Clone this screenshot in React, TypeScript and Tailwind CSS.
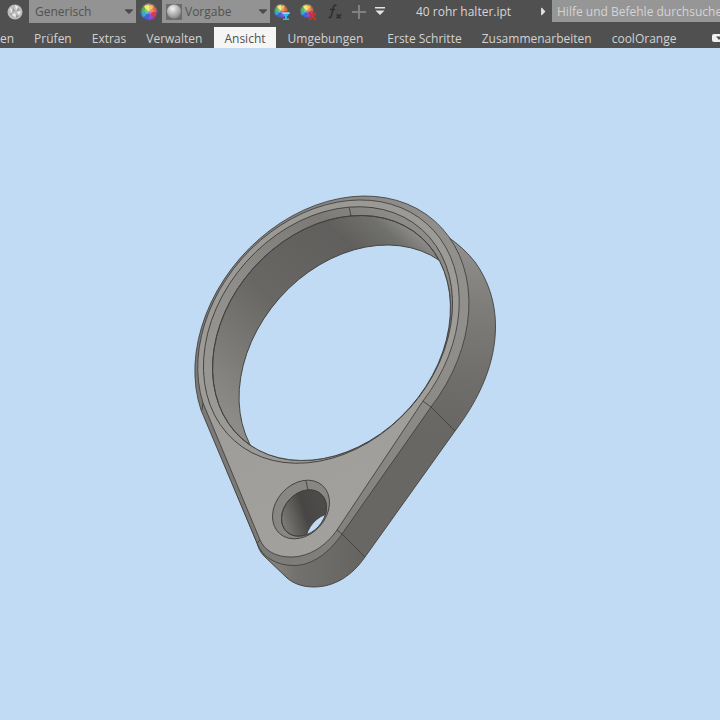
import { FaCaretDown, FaCaretRight } from "react-icons/fa";

const TABS = [
  { label: "en", className: "pr-2" },
  { label: "Prüfen", className: "pl-3 pr-2.5" },
  { label: "Extras", className: "pl-2.5 pr-2" },
  { label: "Verwalten", className: "px-3" },
  { label: "Ansicht", className: "px-2.5", active: true },
  { label: "Umgebungen", className: "pl-3 pr-3.5" },
  { label: "Erste Schritte", className: "pl-2.5 pr-2" },
  { label: "Zusammenarbeiten", className: "pl-3 pr-2.5" },
  { label: "coolOrange", className: "px-2.5" },
];

const WHEEL = ["#f4b23c", "#ee6a35", "#d83a52", "#9a4bc4", "#4561d8", "#38a9d8", "#58b947", "#f3e65a"];

function WheelShape() {
  return (
    <>
      {WHEEL.map((color, i) => {
        const a = (i / WHEEL.length) * Math.PI * 2;
        const b = ((i + 1) / WHEEL.length) * Math.PI * 2;
        return (
          <path
            key={color}
            fill={color}
            d={`M0 0L${8 * Math.sin(a)} ${-8 * Math.cos(a)}A8 8 0 0 1 ${8 * Math.sin(b)} ${-8 * Math.cos(b)}Z`}
          />
        );
      })}
      <circle r="7.5" fill="none" stroke="#4a4f9a" strokeOpacity="0.7" />
      <circle r="4" cy="-2" fill="#fff" fillOpacity="0.25" />
    </>
  );
}

function Dropdown({ label, value, className }: { label: string; value: string; className: string }) {
  return (
    <div className="relative flex h-[23px]">
      <select
        aria-label={label}
        className={`appearance-none bg-[#939393] text-[#525252] outline-none ${className}`}
      >
        <option>{value}</option>
      </select>
      <FaCaretDown className="pointer-events-none absolute top-1 right-0 text-[#4c4c4c]" size={14} />
    </div>
  );
}

function QuickAccess() {
  return (
    <div className="flex h-[27px] items-start">
      <button aria-label="Material" className="ml-[7px] pt-1">
        <svg width="16" height="16" viewBox="0 0 16 16">
          <circle cx="8" cy="8" r="7.5" fill="#bcbcbc" />
          <path d="M3 4l3 2-2 3zM8 1l3 2-2 3zM10 8l4-1-2 4zM5 11l3-2 1 4z" fill="#f1f1f1" />
          <path d="M6 4l2 3-3 1zM11 4l2 2-3 1zM3 9l2 1-1 2zM9 11l3 1-3 2z" fill="#969696" />
        </svg>
      </button>
      <div className="ml-1.5">
        <Dropdown label="Material" value="Generisch" className="w-[107px] pl-1.5" />
      </div>
      <button aria-label="Darstellung" className="ml-1 pt-[3px]">
        <svg width="18" height="18" viewBox="-8.500 -8.500 17 17">
          <WheelShape />
        </svg>
      </button>
      <div className="relative ml-1">
        <Dropdown label="Darstellung" value="Vorgabe" className="w-[108px] pl-[23px]" />
        <svg
          className="pointer-events-none absolute top-1 left-1"
          width="16"
          height="16"
          viewBox="0 0 16 16"
          aria-hidden="true"
        >
          <defs>
            <radialGradient id="ball" cx="0.4" cy="0.3" r="0.7">
              <stop offset="0" stopColor="#f4f4f4" />
              <stop offset="0.5" stopColor="#bdbdbd" />
              <stop offset="1" stopColor="#8a8a8a" />
            </radialGradient>
          </defs>
          <rect width="16" height="16" fill="#6c6c6c" />
          <circle cx="8" cy="7.5" r="7" fill="url(#ball)" />
        </svg>
      </div>
      <button aria-label="Anpassen" className="ml-1 pt-1">
        <svg width="17" height="17" viewBox="0 0 17 17">
          <g transform="translate(7 7) scale(.85)">
            <WheelShape />
          </g>
          <path d="M7 8.500h9.500l-3.500 4v2h2v1.500h-6v-1.500h2v-2z" fill="#2fb8ea" />
          <path d="M8.500 9h7" stroke="#d9f4ff" />
        </svg>
      </button>
      <button aria-label="Löschen" className="ml-2 pt-1">
        <svg width="19" height="17" viewBox="0 0 19 17">
          <g transform="translate(8 7) scale(.85)">
            <WheelShape />
          </g>
          <path d="M10 9l7 7M17 9l-7 7" stroke="#e02b20" strokeWidth="2" />
        </svg>
      </button>
      <button aria-label="Parameter" className="ml-2 pt-1 text-[#2e2e2e]">
        <svg width="17" height="17" viewBox="0 0 17 17" fill="none" stroke="currentColor">
          <path d="M10.500 1.500C8.500 0 7.500 2 7 5L5.500 11.500C5 13.500 4 14 2.500 13M4 5.500h5" strokeWidth="1.500" />
          <path d="M10.500 10.500c2-.5 2 4 4.500 3.500M15 10.500l-4.500 3.500" strokeWidth="1.600" />
        </svg>
      </button>
      <button aria-label="Hinzufügen" className="ml-2 pt-1">
        <svg width="16" height="16" viewBox="0 0 16 16" stroke="#818181" strokeWidth="2">
          <path d="M8 1v14M1 8h14" />
        </svg>
      </button>
      <button aria-label="Schnellzugriff anpassen" className="ml-2 pt-[7px]">
        <svg width="10" height="9" viewBox="0 0 10 9" fill="#e4e4e4">
          <path d="M0 0h10v1.500H0zM.5 3.500h9L5 8z" />
        </svg>
      </button>
      <h1 className="ml-[31px] w-[121px] pt-1 leading-4 text-[#d6d6d6]">40 rohr halter.ipt</h1>
      <button aria-label="Suche einblenden" className="pt-[5px] text-[#e0e0e0]">
        <FaCaretRight size={13} />
      </button>
      <input
        aria-label="Suche"
        placeholder="Hilfe und Befehle durchsuche"
        className="ml-0.5 h-[22px] min-w-0 flex-1 bg-[#969696] pl-[5px] outline-none placeholder:text-[#d4d4d4]"
      />
    </div>
  );
}

function Header() {
  return (
    <header className="overflow-hidden bg-[#505050] text-[12px] whitespace-nowrap">
      <QuickAccess />
      <nav className="flex h-[21px]">
        {TABS.map((tab) => (
          <button
            key={tab.label}
            className={`shrink-0 pt-0.5 ${tab.className} ${tab.active ? "bg-[#f5f5f5] text-[#505050]" : "text-[#d2d2d2]"}`}
          >
            {tab.label}
          </button>
        ))}
        <button aria-label="Multifunktionsleiste" className="ml-auto self-center">
          <svg width="8" height="8" viewBox="0 0 8 8">
            <rect width="12" height="8" rx="2" fill="#f0f0f0" />
            <path d="M4 2.500h6L7 6z" fill="#505050" />
          </svg>
        </button>
      </nav>
    </header>
  );
}

function Model() {
  return (
    <svg className="w-full" viewBox="0 48 720 672" role="img" aria-label="Rohrhalter">
      <defs>
        <linearGradient id="side" gradientUnits="userSpaceOnUse" x1="460" y1="240" x2="440" y2="430">
          <stop offset="0" stopColor="#91908c" />
          <stop offset="0.35" stopColor="#7d7c79" />
          <stop offset="0.75" stopColor="#6e6d6a" />
          <stop offset="1" stopColor="#686764" />
        </linearGradient>
        <linearGradient id="nose" gradientUnits="userSpaceOnUse" x1="262" y1="560" x2="362" y2="560">
          <stop offset="0" stopColor="#8b8a86" />
          <stop offset="0.35" stopColor="#72716e" />
          <stop offset="1" stopColor="#656461" />
        </linearGradient>
        <linearGradient id="face" gradientUnits="userSpaceOnUse" x1="220" y1="250" x2="340" y2="560">
          <stop offset="0" stopColor="#9a9995" />
          <stop offset="1" stopColor="#a2a19e" />
        </linearGradient>
        <linearGradient id="bevel" gradientUnits="userSpaceOnUse" x1="200" y1="380" x2="470" y2="300">
          <stop offset="0" stopColor="#7b7a77" />
          <stop offset="0.5" stopColor="#868581" />
          <stop offset="1" stopColor="#91908c" />
        </linearGradient>
        {/* bore gradients run along the long axis of the tilted ellipse */}
        <linearGradient id="innerBevel" gradientUnits="userSpaceOnUse" x1="-135" y1="0" x2="135" y2="0">
          <stop offset="0" stopColor="#9b9a97" />
          <stop offset="0.4" stopColor="#8e8d8a" />
          <stop offset="0.8" stopColor="#7b7a77" />
          <stop offset="1" stopColor="#8d8c88" />
        </linearGradient>
        <linearGradient id="wall" gradientUnits="userSpaceOnUse" x1="-130" y1="0" x2="135" y2="0">
          <stop offset="0" stopColor="#8d8c88" />
          <stop offset="0.2" stopColor="#7c7b78" />
          <stop offset="0.45" stopColor="#686764" />
          <stop offset="0.8" stopColor="#605f5d" />
          <stop offset="0.93" stopColor="#70706c" />
          <stop offset="1" stopColor="#8d8c88" />
        </linearGradient>
        <linearGradient id="pinWall" gradientUnits="userSpaceOnUse" x1="-22" y1="8" x2="20" y2="-6">
          <stop offset="0" stopColor="#7c7b78" />
          <stop offset="0.55" stopColor="#474644" />
          <stop offset="1" stopColor="#4d4c4a" />
        </linearGradient>
        <clipPath id="bore">
          <ellipse rx="134.800" ry="104.800" transform="translate(331.500 338) rotate(-48.400)" />
        </clipPath>
        <clipPath id="pin">
          <ellipse rx="25.500" ry="19.800" transform="translate(304 513) rotate(-48.400)" />
        </clipPath>
      </defs>

      <g stroke="#43423f" strokeWidth="0.9" strokeLinejoin="round">
        {/* extruded side */}
        <path
          fill="url(#side)"
          d="M202 410A155 121 -48.400 0 1 448 237Q464 248 475 262C488 280 495.500 302 495.500 326C495.500 363 480 398 455 431L365 557C352 576 334 587 314 587C303 587 294 584 287 578L264 556C260 552 258 547 257 543Z"
        />
        <path
          fill="url(#nose)"
          stroke="none"
          d="M258 543L342 534L364 557C352 575 334 586 314 586C303 586 294 583 288 578L265 556Z"
        />
        {/* outer bevel and front face */}
        <path
          fill="url(#bevel)"
          d="M201 410A155 121 -48.400 1 1 431 407L342 534C329 553 312 565.500 294 565.500C276 565.500 262 557 257 543Z"
        />
        <path
          fill="url(#face)"
          d="M203 403A148.200 115.200 -48.400 1 1 423 401L337 530C326 546 309 557 291 557C276 557 265 551 260 540Z"
        />
        <path d="M423 401L431 407L455 431M337 530L342 534L365 557M203 403L202 410M260 540L257 543" fill="none" />

        {/* large bore */}
        <ellipse
          rx="141.200"
          ry="109.700"
          transform="translate(328 335) rotate(-48.400)"
          fill="url(#innerBevel)"
        />
        <ellipse rx="134.800" ry="104.800" transform="translate(331.500 338) rotate(-48.400)" fill="url(#wall)" />
        <g clipPath="url(#bore)">
          <ellipse
            rx="134.800"
            ry="104.800"
            transform="translate(358 367.500) rotate(-48.400)"
            fill="#c1dbf5"
          />
        </g>
        <ellipse rx="134.800" ry="104.800" transform="translate(331.500 338) rotate(-48.400)" fill="none" />
        <path d="M349 207L351 216" />

        {/* small bore */}
        <ellipse rx="32.200" ry="25.200" transform="translate(301 509.500) rotate(-48.400)" fill="#888783" />
        <g transform="translate(304 513)">
          <path
            fill="url(#pinWall)"
            d="M-16.930 19.070A25.500 19.800 -48.400 0 1 16.930 -19.070A25.500 19.800 -48.400 0 1 -16.930 19.070Z"
          />
        </g>
        <g clipPath="url(#pin)">
          <ellipse rx="25.500" ry="19.800" transform="translate(328 536) rotate(-48.400)" fill="#c1dbf5" />
        </g>
        <ellipse rx="25.500" ry="19.800" transform="translate(304 513) rotate(-48.400)" fill="none" />
        <path d="M306 481L308 490" />
      </g>
    </svg>
  );
}

export default function App() {
  return (
    <div className="flex min-h-screen flex-col bg-[#c1dbf5] font-['Open_Sans',sans-serif]">
      <Header />
      <main className="flex-1">
        <Model />
      </main>
    </div>
  );
}
